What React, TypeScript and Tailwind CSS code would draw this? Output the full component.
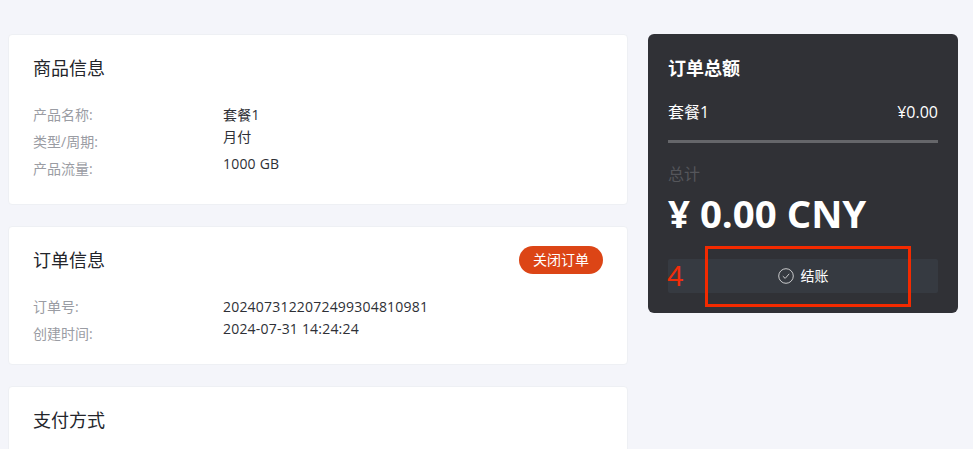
const font = "font-['Open_Sans','Noto_Sans_CJK_SC',sans-serif]";

function Row({ label, value, valueClass = '' }: { label: string; value: string; valueClass?: string }) {
  return (
    <div className="flex h-[23px]">
      <div className="w-[190px] text-[14px] leading-[23px] text-[#9a9ca3]">{label}</div>
      <div className={`text-[14px] leading-[23px] tracking-[0.2px] text-[#2e3036] ${valueClass}`}>{value}</div>
    </div>
  );
}

export default function App() {
  return (
    <div className={`${font} flex h-[449px] w-[973px] items-start gap-[20px] overflow-hidden bg-[#f4f5fa] pl-[8px] pt-[34px]`}>
      <div className="flex w-[620px] flex-col gap-[21px]">
        <div className="h-[171px] rounded-[4px] border border-[#eef0f4] bg-white px-[24px] pt-[19px]">
          <h2 className="text-[18px] leading-[28px] text-[#23252b]">商品信息</h2>
          <div className="mt-[21px] flex flex-col gap-[4px]">
            <Row label="产品名称:" value="套餐1" />
            <Row label="类型/周期:" value="月付" valueClass="-mt-[5px]" />
            <Row label="产品流量:" value="1000 GB" valueClass="-mt-[5px]" />
          </div>
        </div>

        <div className="h-[139px] rounded-[4px] border border-[#eef0f4] bg-white px-[24px] pt-[19px]">
          <div className="flex items-start justify-between">
            <h2 className="text-[18px] leading-[28px] text-[#23252b]">订单信息</h2>
            <button className="h-[28px] rounded-full bg-[#dc4516] px-[14px] text-[14px] leading-[28px] text-white">关闭订单</button>
          </div>
          <div className="mt-[21px] flex flex-col gap-[4px]">
            <Row label="订单号:" value="2024073122072499304810981" />
            <Row label="创建时间:" value="2024-07-31 14:24:24" valueClass="-mt-[5px]" />
          </div>
        </div>

        <div className="h-[100px] rounded-[4px] border border-[#eef0f4] bg-white px-[24px] pt-[19px]">
          <h2 className="text-[18px] leading-[28px] text-[#23252b]">支付方式</h2>
        </div>
      </div>

      <div className="relative h-[279px] w-[310px] rounded-[6px] bg-[#303136] px-[20px] pt-[20px] text-white">
        <h2 className="text-[18px] font-bold leading-[28px]">订单总额</h2>
        <div className="mt-[18px] flex justify-between text-[16px] leading-[24px]">
          <span>套餐1</span>
          <span>¥0.00</span>
        </div>
        <div className="mt-[16px] h-[3px] bg-[#65666a]" />
        <div className="mt-[20px] text-[16px] leading-[22px] text-[#55565b]">总计</div>
        <div className="mt-[6px] text-[38.4px] font-bold leading-[44px]">¥ 0.00 CNY</div>
        <button className="mt-[24px] flex h-[34px] w-full items-center justify-center gap-[7px] rounded-[2px] bg-[#363a41] pb-[1px] text-[14px] text-white">
          <svg width="16" height="16" viewBox="0 0 16 16" fill="none" stroke="#c9cacc" strokeWidth="1">
            <circle cx="8" cy="8" r="7.3" />
            <path d="M4.8 8.2 7.2 10.4 11.2 5.8" />
          </svg>
          <span>结账</span>
        </button>
        <span className="absolute left-[19px] top-[224px] font-['Liberation_Sans',sans-serif] text-[30px] leading-[36px] text-[#f02d0a]">4</span>
        <div className="absolute left-[57px] top-[212px] h-[61px] w-[206px] border-[3px] border-[#f32a00]" />
      </div>
    </div>
  );
}
